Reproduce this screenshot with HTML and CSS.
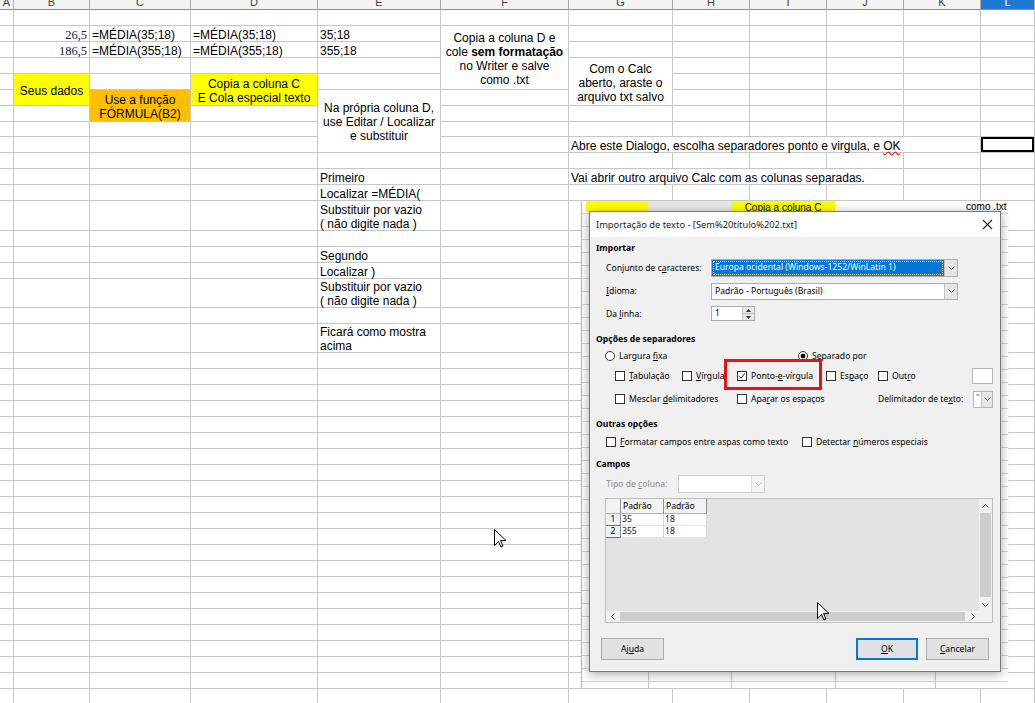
FILE: index.html
```html
<!DOCTYPE html>
<html lang="pt-BR">
<head>
    <meta charset="UTF-8">
    <meta name="viewport" content="width=device-width, initial-scale=1.0">
    <title>Calc - Importação de texto</title>
    <link rel="stylesheet" href="styles.css">
</head>
<body>
    <!-- Spreadsheet (cells are built in script.js) -->
    <div class="sheet" id="sheet"></div>

    <!-- Calc window behind the dialog -->
    <div class="shot">
        <div class="shot-top">
            <span class="shot-pad"></span>
            <span class="shot-yellow w62"></span>
            <span class="shot-grey"></span>
            <span class="shot-yellow w104">Copia a coluna C</span>
            <span class="shot-fill"></span>
            <span class="shot-text">como .txt</span>
        </div>
        <div class="shot-bottom">
            <span class="w67"></span>
            <span class="w83"></span>
            <span class="w104"></span>
            <span class="w100"></span>
        </div>
    </div>

    <!-- Text import dialog -->
    <div class="dialog">
        <div class="dlg-title">
            <span>Importação de texto - [Sem%20título%202.txt]</span>
            <svg class="close" width="11" height="11" viewBox="0 0 11 11"><path d="M1 1L10 10M10 1L1 10" stroke="#222" stroke-width="1.1"/></svg>
        </div>

        <div class="dlg-body">
            <div class="group g-import">Importar</div>

            <div class="field-row charset">
                <span>Conjunto de c<u>a</u>racteres:</span>
                <div class="combo active">
                    <span class="combo-value">Europa ocidental (Windows-1252/WinLatin 1)</span>
                    <span class="combo-btn"><svg width="7" height="4" viewBox="0 0 7 4"><path d="M.5.5l3 3 3-3" fill="none" stroke="#666"/></svg></span>
                </div>
            </div>

            <div class="field-row lang">
                <span><u>I</u>dioma:</span>
                <div class="combo">
                    <span class="combo-value">Padrão - Português (Brasil)</span>
                    <span class="combo-btn"><svg width="7" height="4" viewBox="0 0 7 4"><path d="M.5.5l3 3 3-3" fill="none" stroke="#666"/></svg></span>
                </div>
            </div>

            <div class="field-row from-line">
                <span>Da <u>l</u>inha:</span>
                <div class="spin">
                    <span class="spin-value">1</span>
                    <span class="spin-btns">
                        <span><svg width="5" height="3" viewBox="0 0 5 3"><path d="M0 3h5L2.5 0z" fill="#333"/></svg></span>
                        <span><svg width="5" height="3" viewBox="0 0 5 3"><path d="M0 0h5L2.5 3z" fill="#333"/></svg></span>
                    </span>
                </div>
            </div>

            <div class="group g-sep">Opções de separadores</div>

            <div class="radio-row">
                <span class="opt"><i class="radio"></i><span>Largura <u>f</u>ixa</span></span>
                <span class="opt"><i class="radio on"></i><span><u>S</u>eparado por</span></span>
            </div>

            <div class="sep-grid">
                <span class="opt"><i class="check"></i><span><u>T</u>abulação</span></span>
                <span class="opt"><i class="check"></i><span><u>V</u>írgula</span></span>
                <span class="opt"><i class="check"><svg width="8" height="8" viewBox="0 0 8 8"><path d="M1 4.2l2 2 4-5" fill="none" stroke="#222" stroke-width="1"/></svg></i><span>Ponto-<u>e</u>-vírgula</span></span>
                <span class="opt"><i class="check"></i><span>Es<u>p</u>aço</span></span>
                <span class="opt last">
                    <span class="opt"><i class="check"></i><span>Out<u>r</u>o</span></span>
                    <span class="textbox"></span>
                </span>
                <span class="opt span2"><i class="check"></i><span>Mesclar <u>d</u>elimitadores</span></span>
                <span class="opt span2"><i class="check"></i><span>Apa<u>r</u>ar os espaços</span></span>
                <span class="opt last">
                    <span>Delimitador de te<u>x</u>to:</span>
                    <span class="mini-combo">
                        <span class="mini-value">"</span>
                        <span class="combo-btn"><svg width="7" height="4" viewBox="0 0 7 4"><path d="M.5.5l3 3 3-3" fill="none" stroke="#666"/></svg></span>
                    </span>
                </span>
            </div>

            <div class="group g-other">Outras opções</div>

            <div class="other-row">
                <span class="opt"><i class="check"></i><span><u>F</u>ormatar campos entre aspas como texto</span></span>
                <span class="opt"><i class="check"></i><span>Detectar <u>n</u>úmeros especiais</span></span>
            </div>

            <div class="group g-fields">Campos</div>

            <div class="type-row">
                <span class="disabled">Tipo de <u>c</u>oluna:</span>
                <div class="combo off">
                    <span class="combo-value"></span>
                    <span class="combo-btn"><svg width="7" height="4" viewBox="0 0 7 4"><path d="M.5.5l3 3 3-3" fill="none" stroke="#bbb"/></svg></span>
                </div>
            </div>

            <div class="preview">
                <div class="pv-area">
                    <div class="pv-table">
                        <span class="pv-corner"></span>
                        <span class="pv-head">Padrão</span>
                        <span class="pv-head">Padrão</span>
                        <span class="pv-rowhead">1</span>
                        <span class="pv-cell">35</span>
                        <span class="pv-cell">18</span>
                        <span class="pv-rowhead">2</span>
                        <span class="pv-cell">355</span>
                        <span class="pv-cell">18</span>
                    </div>
                </div>
                <div class="vscroll">
                    <span class="arrow"><svg width="7" height="4" viewBox="0 0 7 4"><path d="M.5 3.5l3-3 3 3" fill="none" stroke="#444"/></svg></span>
                    <span class="thumb"></span>
                    <span class="arrow"><svg width="7" height="4" viewBox="0 0 7 4"><path d="M.5.5l3 3 3-3" fill="none" stroke="#444"/></svg></span>
                </div>
                <div class="hscroll">
                    <span class="arrow"><svg width="4" height="7" viewBox="0 0 4 7"><path d="M3.5.5l-3 3 3 3" fill="none" stroke="#444"/></svg></span>
                    <span class="thumb"></span>
                    <span class="arrow"><svg width="4" height="7" viewBox="0 0 4 7"><path d="M.5.5l3 3-3 3" fill="none" stroke="#444"/></svg></span>
                </div>
                <div class="pv-end"></div>
            </div>

            <div class="buttons">
                <button class="help">Aj<u>u</u>da</button>
                <button class="default"><u>O</u>K</button>
                <button><u>C</u>ancelar</button>
            </div>
        </div>

        <!-- red frame around the chosen separator -->
        <div class="highlight"></div>
    </div>

    <!-- mouse pointers -->
    <svg class="pointer on-sheet" width="12" height="19" viewBox="0 0 12 19"><path d="M.5.5v16l4-4 2.5 5.5 2-1-2.5-5.5h5.5z" fill="#fff" stroke="#000"/></svg>
    <svg class="pointer in-dialog" width="12" height="19" viewBox="0 0 12 19"><path d="M.5.5v16l4-4 2.5 5.5 2-1-2.5-5.5h5.5z" fill="#fff" stroke="#000"/></svg>

    <script src="script.js"></script>
</body>
</html>
```

FILE: styles.css
```css
* {
    margin: 0;
    padding: 0;
    box-sizing: border-box;
}

body {
    position: relative;
    width: 1035px;
    height: 703px;
    overflow: hidden;
    background-color: #fff;
    font-family: "Liberation Sans", Arial, sans-serif;
    font-size: 12px;
    color: #000;
}

/* ---------- spreadsheet ---------- */

.sheet {
    display: grid;
    grid-template-columns: 14px 76px 101px 127px 123px 128px 104px 77px 77px 77px 77px 54px;
    grid-template-rows: 10px repeat(7, 16px) 15px repeat(4, 16px) 30px repeat(3, 16px) 29px 16px 29px repeat(22, 16px);
}

.col-head {
    overflow: hidden;
    text-align: center;
    font-size: 11px;
    line-height: 5px;
    color: #444;
    background-color: #f3f3f3;
    border-right: 1px solid #a9a9a9;
    border-bottom: 1px solid #8c8c8c;
}

.col-head.active {
    background-color: #1f78d1;
    color: #fff;
}

.cell {
    display: flex;
    align-items: center;
    min-width: 0;
    padding: 2px 2px 0;
    line-height: 14px;
    white-space: nowrap;
    border-right: 1px solid #c6c6c6;
    border-bottom: 1px solid #c6c6c6;
}

.cell.num {
    justify-content: flex-end;
    font-family: "Liberation Serif", "Times New Roman", serif;
    font-size: 12.5px;
    color: #1c1c3c;
}

.cell.center {
    justify-content: center;
    text-align: center;
}

.cell.yellow { background-color: #ffff00; }
.cell.orange { background-color: #ffbf00; }

.cell.sel {
    box-shadow: inset 0 0 0 2px #000;
}

.typo {
    text-decoration: underline wavy #e02020;
    text-decoration-skip-ink: none;
}

/* ---------- Calc window behind the dialog ---------- */

.shot {
    position: absolute;
    left: 581px;
    top: 201px;
    width: 427px;
    height: 487px;
    display: flex;
    flex-direction: column;
    justify-content: space-between;
    background: repeating-linear-gradient(to bottom, #fff 0 12px, #d2d2d2 12px 13px);
    border-left: 1px solid #b8b8b8;
}

.shot-top {
    display: flex;
    height: 11px;
    overflow: hidden;
    background-color: #fff;
    font-size: 10px;
    line-height: 13px;
}

.shot-pad { width: 4px; }
.shot-grey { width: 83px; background-color: #e8e8e8; }
.shot-fill { flex: 1; }

.shot-yellow {
    background-color: #ffff00;
    text-align: center;
}

.shot-text {
    width: 42px;
    line-height: 11px;
}

.w62 { width: 62px; }
.w67 { width: 67px; }
.w83 { width: 83px; }
.w100 { width: 100px; }
.w104 { width: 104px; }

.shot-bottom {
    display: flex;
    height: 16px;
}

.shot-bottom span {
    border-right: 1px solid #c6c6c6;
}

/* ---------- dialog ---------- */

.dialog {
    position: absolute;
    left: 589px;
    top: 211px;
    width: 412px;
    height: 461px;
    background-color: #f0f0f0;
    border: 1px solid #7a7a7a;
    box-shadow: 0 2px 10px rgba(0,0,0,0.35);
    font-family: "Noto Sans", "Open Sans", sans-serif;
    font-size: 8.6px;
    color: #000;
}

.dlg-title {
    display: flex;
    align-items: center;
    justify-content: space-between;
    height: 25px;
    padding: 0 7px 0 6px;
    background-color: #fff;
    font-size: 9.3px;
    color: #222;
}

.dlg-body {
    padding: 0 7px 0 6px;
}

.group {
    height: 14px;
    line-height: 14px;
    font-weight: bold;
}

.g-import { margin-top: 4px; }
.g-sep { margin-top: 10px; }
.g-other { margin-top: 9px; }
.g-fields { margin-top: 8px; }

u {
    text-decoration-thickness: 1px;
    text-underline-offset: 1px;
}

.field-row {
    display: grid;
    grid-template-columns: 105px 1fr;
    align-items: center;
    padding: 0 35px 0 10px;
}

.charset { margin-top: 3px; height: 20px; }
.lang { margin-top: 4px; height: 18px; }
.from-line { margin-top: 5px; height: 17px; }

.combo {
    display: flex;
    height: 18px;
    background-color: #fff;
    border: 1px solid #adadad;
}

.lang .combo { height: 17px; }

.combo-value {
    flex: 1;
    padding-left: 3px;
    line-height: 15px;
    white-space: nowrap;
    overflow: hidden;
}

.combo.active .combo-value {
    background-color: #0078d7;
    color: #fff;
    outline: 1px dotted #fff;
    outline-offset: -2px;
}

.combo-btn {
    display: flex;
    align-items: center;
    justify-content: center;
    width: 13px;
    background-color: #e6e6e6;
    border-left: 1px solid #c4c4c4;
}

.combo.off {
    border-color: #cfcfcf;
}

.combo.off .combo-btn {
    background-color: #f4f4f4;
    border-left-color: #dedede;
}

.spin {
    display: flex;
    width: 44px;
    height: 15px;
    background-color: #fff;
    border: 1px solid #adadad;
}

.spin-value {
    flex: 1;
    padding-left: 3px;
    line-height: 13px;
}

.spin-btns {
    display: flex;
    flex-direction: column;
    width: 12px;
    border-left: 1px solid #c4c4c4;
}

.spin-btns span {
    flex: 1;
    display: flex;
    align-items: center;
    justify-content: center;
    background-color: #e8e8e8;
}

.spin-btns span + span {
    border-top: 1px solid #c4c4c4;
}

.opt {
    display: flex;
    align-items: center;
    gap: 4px;
    white-space: nowrap;
}

.radio {
    width: 10px;
    height: 10px;
    border: 1px solid #333;
    border-radius: 50%;
    background-color: #fff;
}

.radio.on {
    background: radial-gradient(circle, #111 0 2.2px, #fff 2.7px);
}

.check {
    display: flex;
    align-items: center;
    justify-content: center;
    width: 10px;
    height: 10px;
    border: 1px solid #333;
    background-color: #fff;
}

.radio-row {
    display: grid;
    grid-template-columns: 193px 1fr;
    align-items: center;
    height: 14px;
    margin-top: 3px;
    padding-left: 9px;
}

.sep-grid {
    display: grid;
    grid-template-columns: 67px 55px 89px 52px 1fr;
    grid-template-rows: 18px 18px;
    row-gap: 5px;
    align-items: center;
    margin-top: 4px;
    padding-left: 19px;
}

.span2 { grid-column: span 2; }

.opt.last {
    justify-content: space-between;
}

.textbox {
    width: 21px;
    height: 16px;
    background-color: #fff;
    border: 1px solid #b5b5b5;
}

.mini-combo {
    display: flex;
    width: 20px;
    height: 17px;
    background-color: #fff;
    border: 1px solid #b5b5b5;
}

.mini-value {
    flex: 1;
    padding-left: 2px;
    line-height: 13px;
    color: #555;
}

.mini-combo .combo-btn {
    width: 11px;
}

.other-row {
    display: grid;
    grid-template-columns: 196px 1fr;
    align-items: center;
    height: 14px;
    margin-top: 4px;
    padding-left: 10px;
}

.type-row {
    display: grid;
    grid-template-columns: 72px 87px;
    align-items: center;
    height: 18px;
    margin-top: 4px;
    padding-left: 10px;
}

.disabled {
    color: #8f8f8f;
}

/* preview grid */

.preview {
    display: grid;
    grid-template-columns: 1fr 13px;
    grid-template-rows: 1fr 11px;
    width: 388px;
    height: 125px;
    margin: 5px 0 0 9px;
    background-color: #e3e3e3;
    border: 1px solid #bdbdbd;
}

.pv-table {
    display: grid;
    grid-template-columns: 15px 43px 43px;
    grid-template-rows: 15px 12px 12px;
    width: max-content;
    line-height: 11px;
}

.pv-corner,
.pv-head,
.pv-rowhead {
    background-color: #f2f2f2;
    border-right: 1px solid #8e8e8e;
    border-bottom: 1px solid #b0b0b0;
}

.pv-head {
    padding: 2px 0 0 2px;
}

.pv-rowhead {
    text-align: center;
    border-bottom-color: #6f6f6f;
}

.pv-cell {
    padding-left: 1px;
    background-color: #fff;
    color: #101030;
    border-right: 1px solid #d6d6d6;
    border-bottom: 1px solid #e4e4e4;
}

.vscroll,
.hscroll {
    display: flex;
    background-color: #f0f0f0;
}

.vscroll {
    flex-direction: column;
}

.arrow {
    display: flex;
    align-items: center;
    justify-content: center;
    flex: 0 0 13px;
}

.thumb {
    flex: 1;
    margin: 1px;
    background-color: #cdcdcd;
}

.pv-end {
    background-color: #f0f0f0;
}

/* buttons */

.buttons {
    display: flex;
    gap: 8px;
    height: 22px;
    margin-top: 15px;
    padding: 0 4px 0 5px;
}

.buttons button {
    width: 63px;
    height: 22px;
    font: inherit;
    color: #000;
    background-color: #e1e1e1;
    border: 1px solid #adadad;
}

.buttons .help {
    margin-right: auto;
}

.buttons .default {
    width: 62px;
    border-color: #0078d7;
    box-shadow: inset 0 0 0 1px #0078d7;
}

.highlight {
    position: absolute;
    left: 134px;
    top: 147px;
    width: 98px;
    height: 31px;
    border: 3px solid #e5141b;
}

.pointer {
    position: absolute;
}

.pointer.on-sheet { left: 494px; top: 529px; }
.pointer.in-dialog { left: 817px; top: 602px; }
```

FILE: script.js
```javascript
// Builds the Calc sheet: column header strip, then every body cell.
const sheet = document.getElementById('sheet');
const letters = 'ABCDEFGHIJKL';
const ROWS = 41;

// address -> text, merged size [rows, cols] and extra classes
const cells = {
    B2: { text: '26,5', cls: 'num' },
    C2: { text: '=MÉDIA(35;18)' },
    D2: { text: '=MÉDIA(35;18)' },
    E2: { text: '35;18' },
    B3: { text: '186,5', cls: 'num' },
    C3: { text: '=MÉDIA(355;18)' },
    D3: { text: '=MÉDIA(355;18)' },
    E3: { text: '355;18' },
    F2: { text: 'Copia a coluna D e<br>cole <b>sem formatação</b><br>no Writer e salve<br>como .txt', span: [4, 1], cls: 'center' },
    G4: { text: 'Com o Calc<br>aberto, araste o<br>arquivo txt salvo', span: [3, 1], cls: 'center' },
    B5: { text: 'Seus dados', span: [2, 1], cls: 'center yellow' },
    D5: { text: 'Copia a coluna C<br>E Cola especial texto', span: [2, 1], cls: 'center yellow' },
    C6: { text: 'Use a função<br>FÓRMULA(B2)', span: [2, 1], cls: 'center orange' },
    E6: { text: 'Na própria coluna D,<br>use Editar / Localizar<br>e substituir', span: [4, 1], cls: 'center' },
    G9: { text: 'Abre este Dialogo, escolha separadores ponto e virgula, e <span class="typo">OK</span>', span: [1, 5] },
    L9: { cls: 'sel' },
    E11: { text: 'Primeiro' },
    G11: { text: 'Vai abrir outro arquivo Calc com as colunas separadas.', span: [1, 4] },
    E12: { text: 'Localizar =MÉDIA(' },
    E13: { text: 'Substituir por vazio<br>( não digite nada )' },
    E15: { text: 'Segundo' },
    E16: { text: 'Localizar )' },
    E17: { text: 'Substituir por vazio<br>( não digite nada )' },
    E19: { text: 'Ficará como mostra<br>acima' }
};

function parse(addr) {
    return { col: letters.indexOf(addr[0]), row: parseInt(addr.slice(1), 10) };
}

// Column header strip
letters.split('').forEach((letter) => {
    const head = document.createElement('div');
    head.className = 'col-head' + (letter === 'L' ? ' active' : '');
    head.textContent = letter;
    sheet.appendChild(head);
});

// Slots hidden under merged ranges
const covered = new Set();
Object.entries(cells).forEach(([addr, cell]) => {
    const { col, row } = parse(addr);
    const [rs, cs] = cell.span || [1, 1];
    for (let r = row; r < row + rs; r++) {
        for (let c = col; c < col + cs; c++) {
            if (r !== row || c !== col) covered.add(letters[c] + r);
        }
    }
});

for (let r = 1; r <= ROWS; r++) {
    for (let c = 0; c < letters.length; c++) {
        const addr = letters[c] + r;
        if (covered.has(addr)) continue;

        const cell = cells[addr] || {};
        const [rs, cs] = cell.span || [1, 1];
        const el = document.createElement('div');
        el.className = 'cell' + (cell.cls ? ' ' + cell.cls : '');
        el.style.gridArea = `${r + 1} / ${c + 1} / span ${rs} / span ${cs}`;
        if (cell.text) el.innerHTML = '<span>' + cell.text + '</span>';
        sheet.appendChild(el);
    }
}
```
